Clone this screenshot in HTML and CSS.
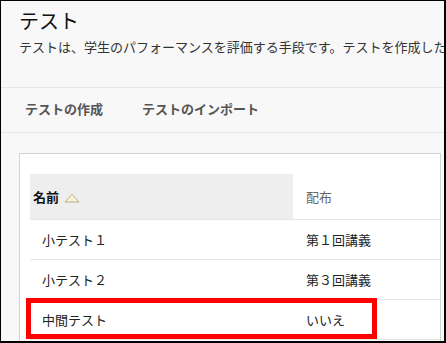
FILE: index.html
```html
<!DOCTYPE html>
<html lang="ja">
  <head>
    <meta charset="UTF-8" />
    <meta name="viewport" content="width=device-width, initial-scale=1.0" />
    <title>テスト</title>
    <link rel="stylesheet" href="styles.css">
  </head>
  <body>
    <div class="frame">
      <div class="page-header">
        <h1 class="page-title">テスト</h1>
        <p class="page-desc">テストは、学生のパフォーマンスを評価する手段です。テストを作成したら</p>
      </div>

      <div class="action-bar">
        <span class="action">テストの作成</span>
        <span class="action">テストのインポート</span>
      </div>

      <div class="panel">
        <table class="test-table">
          <thead>
            <tr>
              <th class="col-name sorted">
                名前
                <svg class="sort-icon" width="16" height="10" viewBox="0 0 16 10">
                  <polygon points="1,9 8,1.5 15,9" fill="#f8f1d8" stroke="#bcae86" stroke-width="1" />
                </svg>
              </th>
              <th class="col-dist">配布</th>
            </tr>
          </thead>
          <tbody>
            <tr>
              <td class="col-name">小テスト１</td>
              <td class="col-dist">第１回講義</td>
            </tr>
            <tr>
              <td class="col-name">小テスト２</td>
              <td class="col-dist">第３回講義</td>
            </tr>
            <tr>
              <td class="col-name">中間テスト</td>
              <td class="col-dist">いいえ</td>
            </tr>
          </tbody>
        </table>
        <div class="highlight"></div>
      </div>
    </div>
  </body>
</html>
```

FILE: styles.css
```css
* {
  box-sizing: border-box;
}

body {
  margin: 0;
  font-family: "Noto Sans CJK JP", "Noto Sans", sans-serif;
  color: #222;
}

.frame {
  width: 446px;
  height: 343px;
  overflow: hidden;
  background-color: #f8f8f8;
  border-top: 1px solid #000;
  border-left: 1px solid #000;
  border-right: 2px solid #000;
  border-bottom: 2px solid #000;
}

.page-header {
  height: 87px;
  padding: 8px 0 0 18px;
  border-bottom: 1px solid #e6e6e6;
  overflow: hidden;
}

.page-title {
  margin: 0;
  font-size: 20px;
  font-weight: normal;
  line-height: 24px;
  color: #111;
}

.page-desc {
  margin: 5px 0 0;
  font-size: 13px;
  line-height: 18px;
  color: #333;
  white-space: nowrap;
}

.action-bar {
  display: flex;
  gap: 39px;
  padding: 12px 0 14px 24px;
  border-bottom: 1px solid #e6e6e6;
}

.action {
  font-size: 13px;
  line-height: 18px;
  font-weight: bold;
  color: #555;
}

.panel {
  position: relative;
  margin: 20px 3px 0 18px;
  padding: 20px 0 0 10px;
  background-color: #fff;
  border: 1px solid #d4d4d4;
  height: 200px;
}

.test-table {
  width: 100%;
  border-collapse: collapse;
  font-size: 13px;
}

.test-table th,
.test-table td {
  text-align: left;
  padding: 0;
  border-bottom: 1px solid #e6e6e6;
}

.test-table th {
  height: 45px;
  font-weight: normal;
}

.test-table td {
  height: 40px;
  color: #222;
}

.test-table th.col-name {
  width: 263px;
  padding-left: 3px;
  background-color: #eeeeee;
  font-weight: bold;
  color: #111;
}

.test-table td.col-name {
  padding-left: 12px;
}

.test-table .col-dist {
  padding-left: 13px;
}

.test-table th.col-dist {
  color: #666;
}

.sort-icon {
  vertical-align: -1px;
  margin-left: 2px;
}

.highlight {
  position: absolute;
  left: 6px;
  top: 144px;
  width: 351px;
  height: 41px;
  border: 5px solid #ff0000;
}
```
